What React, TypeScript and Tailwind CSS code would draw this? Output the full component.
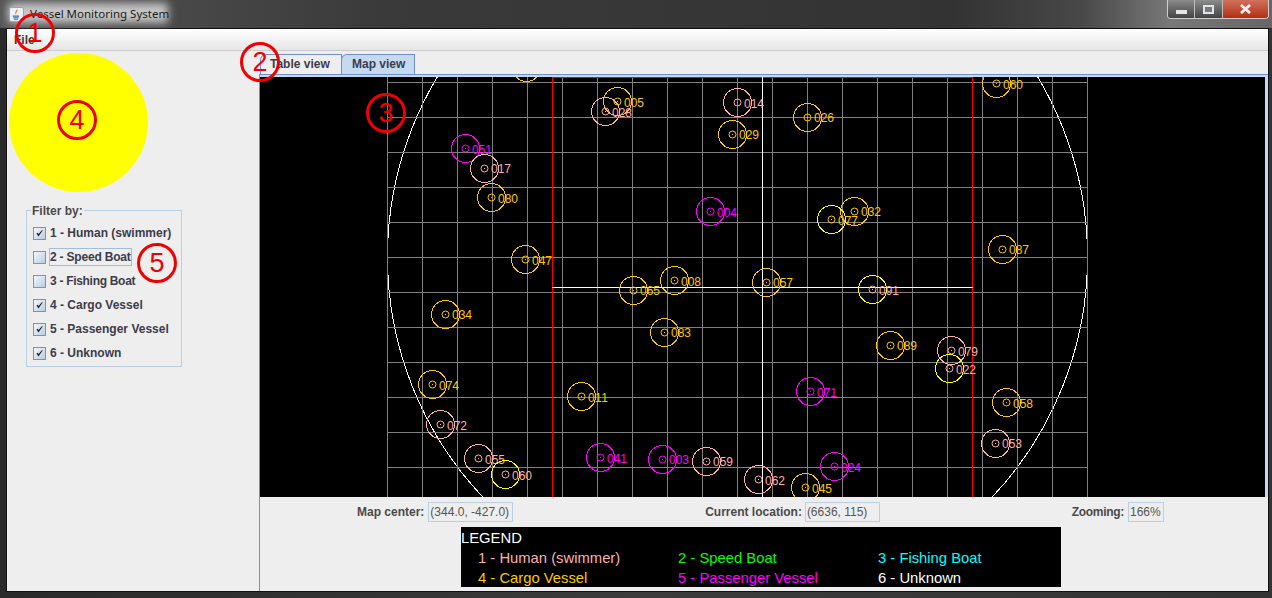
const ORANGE = "#ffc800";
const PINK = "#ffafaf";
const MAGENTA = "#ff00ff";
const YELLOW = "#ffff00";

type V = [string, number, number, string, string?];
const vessels: V[] = [
  ["", 526, 67, ORANGE],
  ["005", 617, 101, ORANGE],
  ["028", 605, 111, PINK],
  ["051", 465, 148, MAGENTA],
  ["017", 484, 168, PINK],
  ["080", 491, 197, ORANGE],
  ["004", 710, 211, MAGENTA],
  ["047", 525, 259, ORANGE],
  ["008", 674, 280, ORANGE],
  ["065", 633, 290, ORANGE],
  ["014", 737, 102, PINK],
  ["029", 732, 134, ORANGE],
  ["026", 807, 117, ORANGE],
  ["060", 996, 83, ORANGE],
  ["032", 854, 211, ORANGE],
  ["077", 831, 219, ORANGE, YELLOW],
  ["087", 1002, 249, ORANGE],
  ["057", 766, 282, ORANGE],
  ["091", 872, 289, PINK, YELLOW],
  ["034", 445, 314, ORANGE],
  ["083", 664, 332, ORANGE],
  ["074", 432, 384, ORANGE],
  ["011", 581, 396, ORANGE],
  ["072", 440, 424, PINK],
  ["055", 478, 458, PINK],
  ["060", 505, 474, PINK, YELLOW],
  ["041", 600, 457, MAGENTA],
  ["003", 662, 459, MAGENTA],
  ["059", 706, 461, PINK],
  ["089", 890, 345, ORANGE],
  ["079", 951, 350, PINK],
  ["022", 949, 368, PINK, YELLOW],
  ["071", 810, 391, MAGENTA],
  ["058", 1006, 402, ORANGE],
  ["053", 995, 443, PINK],
  ["024", 834, 466, MAGENTA],
  ["062", 758, 479, PINK],
  ["045", 805, 487, ORANGE],
];

// labels drawn one pixel lower relative to their circle in the reference
const lowLabels = new Set([
  "005", "028", "051", "080", "004", "047", "008", "014", "060", "091", "074",
  "011", "072", "055", "077", "041", "079", "022", "071", "058", "024", "062", "045",
]);

const filters: [string, boolean, string, boolean?][] = [
  ["1 - Human (swimmer)", true, "tracking-normal"],
  ["2 - Speed Boat", false, "tracking-[-0.2px]", true],
  ["3 - Fishing Boat", false, "tracking-[-0.3px]"],
  ["4 - Cargo Vessel", true, "tracking-normal"],
  ["5 - Passenger Vessel", true, "tracking-normal"],
  ["6 - Unknown", true, "tracking-normal"],
];

function MapCanvas() {
  const xs = Array.from({ length: 21 }, (_, i) => 387.5 + i * 35);
  const ys = Array.from({ length: 12 }, (_, i) => 82.5 + i * 35);
  return (
    <svg
      width="1005"
      height="420"
      viewBox="260 77 1005 420"
      className="block w-[1005px] h-[420px] bg-black shrink-0"
      shapeRendering="crispEdges"
    >
      <circle cx={737.5} cy={257} r={350} fill="none" stroke="#fff" strokeWidth={1} />
      {xs.map((x) => (
        <line key={x} x1={x} x2={x} y1={77} y2={497} stroke="#808080" />
      ))}
      {ys.map((y) => (
        <line key={y} x1={387} x2={1088} y1={y} y2={y} stroke="#808080" />
      ))}
      <line x1={552.5} x2={552.5} y1={77} y2={497} stroke="#ff0000" />
      <line x1={972.5} x2={972.5} y1={77} y2={497} stroke="#ff0000" />
      <line x1={552} x2={973} y1={77.5} y2={77.5} stroke="#ff0000" />
      <line x1={552} x2={973} y1={287.5} y2={287.5} stroke="#ffffff" />
      <line x1={762.5} x2={762.5} y1={77} y2={497} stroke="#ffffff" />
      {vessels.map(([id, x, y, c, ring], i) => (
        <g key={i}>
          <circle cx={x + 0.5} cy={y + 0.5} r={14} fill="none" stroke={ring ?? c} />
          <circle cx={x + 0.5} cy={y + 0.5} r={3.5} fill="none" stroke={c} shapeRendering="auto" />
          <rect x={x} y={y} width={1} height={1} fill={c} />
          {id && (
            <text
              x={x + 7}
              y={y + (lowLabels.has(id) ? 6 : 5)}
              fill={c}
              fontSize={12}
              fontFamily="'Liberation Sans', Arial, sans-serif"
              textLength={20}
            >
              {id}
            </text>
          )}
        </g>
      ))}
    </svg>
  );
}

function Check({ on }: { on: boolean }) {
  return (
    <span className="w-[13px] h-[13px] border border-[#7f93ad] bg-gradient-to-br from-[#f4f8fc] to-[#b8cce4] flex items-center justify-center shrink-0">
      {on && (
        <svg width="9" height="9" viewBox="0 0 9 9">
          <path d="M1.5 4.5 L3.5 7.5 L7.8 1.2 L6.8 1.2 L3.6 5 L2.6 3.8 Z" fill="#222" />
        </svg>
      )}
    </span>
  );
}

function Ring({ n, className }: { n: string; className: string }) {
  return (
    <div
      className={
        "absolute w-[40px] h-[40px] rounded-full border-[3px] border-[#f00000] flex items-center justify-center text-[27px] leading-none text-[#f00000] font-['Liberation_Sans',Arial,sans-serif] " +
        className
      }
    >
      {n}
    </div>
  );
}

function Field({ label, value, w, lc = "" }: { label: string; value: string; w: string; lc?: string }) {
  return (
    <div className="flex items-start gap-[4px]">
      <span className={"font-bold text-[#4a4a4a] text-[12px] leading-[20px] " + lc}>{label}</span>
      <span className={"h-[20px] border border-[#b8cfe5] text-[#555] text-[12px] leading-[19px] pl-[1px] " + w}>{value}</span>
    </div>
  );
}

function Legend() {
  const items: [string, string][] = [
    ["1 - Human (swimmer)", PINK],
    ["2 - Speed Boat", "#00ff00"],
    ["3 - Fishing Boat", "#00ffff"],
    ["4 - Cargo Vessel", ORANGE],
    ["5 - Passenger Vessel", MAGENTA],
    ["6 - Unknown", "#ffffff"],
  ];
  return (
    <div className="w-[600px] h-[60px] bg-black ml-[201px] pt-px text-[14.8px] leading-[20px] text-white">
      <div className="h-[20px]">LEGEND</div>
      <div className="grid grid-cols-[200px_200px_200px] pl-[17px]">
        {items.map(([t, c]) => (
          <div key={t} style={{ color: c }} className="h-[20px] whitespace-nowrap">
            {t}
          </div>
        ))}
      </div>
    </div>
  );
}

function WinButtons() {
  return (
    <div className="absolute right-[3px] top-0 flex h-[19px] w-[102px] rounded-b-[4px] border border-t-0 border-[#cfcfcf] overflow-hidden">
      <div className="w-[27px] bg-gradient-to-b from-[#8c8c8c] to-[#444] border-r border-[#bdbdbd] flex items-center justify-center">
        <span className="w-[11px] h-[4px] mt-[5px] bg-[#e6e6e6]" />
      </div>
      <div className="w-[28px] bg-gradient-to-b from-[#8c8c8c] to-[#444] border-r border-[#bdbdbd] flex items-center justify-center">
        <span className="w-[11px] h-[9px] border-2 border-[#dfe3ea] bg-[#777]" />
      </div>
      <div className="flex-1 bg-gradient-to-b from-[#d0705a] to-[#b22c10] flex items-center justify-center">
        <svg width="11" height="10" viewBox="0 0 11 10">
          <path d="M1 1 L10 9 M10 1 L1 9" stroke="#f0f0f0" strokeWidth="2.8" />
        </svg>
      </div>
    </div>
  );
}

export default function App() {
  return (
    <div className="relative w-[1272px] h-[598px] overflow-hidden bg-gradient-to-r from-[#2a2a2a] via-[#3c3c3c] to-[#343434] font-['Liberation_Sans',Arial,sans-serif]">
      {/* title bar */}
      <div className="relative h-[28px] flex items-center pl-[9px] gap-[6px] bg-[linear-gradient(90deg,#555_0%,#3a3a3a_30%,#333_75%,#484848_85%,#787878_92%,#666_100%)]">
        <div className="absolute left-[8px] top-[3px] w-[160px] h-[20px] bg-[#dcdcdc] opacity-85 blur-[4px]" />
        <svg width="15" height="15" viewBox="0 0 14 14" className="relative">
          <rect x="0.5" y="0.5" width="13" height="13" rx="1.5" fill="#eef2f7" stroke="#9aa6b5" />
          <path d="M7.5 2 C9 4 5.5 5 7 7.5 C5 6 6 4 7.5 2 Z" fill="#e8761c" />
          <path d="M3.5 8.5 H9.5 M4 10 H9 M4.5 11.5 H8.5" stroke="#3d6ea8" strokeWidth="1" />
        </svg>
        <span className="relative text-[11.5px] text-[#1a1a1a] font-['Noto_Sans',sans-serif]">Vessel Monitoring System</span>
        <WinButtons />
      </div>

      {/* window client area */}
      <div className="ml-[6px] mr-[3px] h-[564px] border border-[#111] bg-[#eeeeee] flex flex-col">
        <div className="h-[22px] shrink-0 bg-gradient-to-b from-white to-[#e6e6e6] border-b border-[#cccccc] pl-[7px] text-[12px] leading-[23px] font-bold text-[#3c3c3c]">
          File
        </div>
        <div className="flex-1 flex min-h-0">
          {/* left column */}
          <div className="w-[252px] shrink-0 pl-[2px] pt-[2px]">
            <div className="w-[139px] h-[139px] rounded-full bg-[#ffff00]" />
            <div className="relative ml-[17px] mt-[18px] w-[156px] h-[157px] border border-[#b8cfe5] pt-[10px] pl-[6px]">
              <span className="absolute left-[4px] -top-[7px] bg-[#eeeeee] px-[1px] text-[12px] leading-[14px] font-bold text-[#4a4a4a]">
                Filter by:
              </span>
              {filters.map(([t, on, tr, focus]) => (
                <div key={t} className="h-[24px] flex items-center gap-[3px]">
                  <Check on={on} />
                  <span
                    className={
                      "text-[12px] font-bold text-[#3c3c4a] whitespace-nowrap h-[18px] leading-[16px] border " +
                      tr +
                      " " +
                      (focus ? "border-[#a3bdd6]" : "border-transparent")
                    }
                  >
                    {t}
                  </span>
                </div>
              ))}
            </div>
          </div>

          {/* right column */}
          <div className="flex-1 min-w-0 flex flex-col">
            <div className="h-[23px] shrink-0 flex items-end pl-[1px] pt-[3px]">
              <div className="w-[82px] h-[20px] pl-[9px] border border-b-0 border-[#6e8fd0] rounded-tl-[6px] text-[12px] leading-[19px] font-bold text-[#3c3c4a]">
                Table view
              </div>
              <div className="w-[74px] h-[20px] pl-[10px] -ml-px border border-b-0 border-[#6e8fd0] rounded-tl-[6px] bg-[#c5d9f1] text-[12px] leading-[19px] font-bold text-[#3c3c4a]">
                Map view
              </div>
            </div>
            <div className="flex-1 min-h-0 border-l border-t border-[#6e8fd0] bg-[#eeeeee] flex flex-col">
              <div className="h-[2px] bg-[#c5d9f1] shrink-0" />
              <div className="flex bg-[#c5d9f1]">
                <MapCanvas />
              </div>
              <div className="h-[30px] pt-[5px] pl-[97px] pr-[104px] flex justify-between items-start">
                <Field label="Map center:" value="(344.0, -427.0)" w="w-[85px]" />
                <Field label="Current location:" value="(6636, 115)" w="w-[75px]" lc="-mr-px" />
                <Field label="Zooming:" value="166%" w="w-[36px]" lc="tracking-[-0.3px]" />
              </div>
              <Legend />
            </div>
          </div>
        </div>
      </div>

      <Ring n="1" className="left-[15px] top-[13px]" />
      <Ring n="2" className="left-[240px] top-[42px]" />
      <Ring n="3" className="left-[366px] top-[93px]" />
      <Ring n="4" className="left-[57px] top-[100px]" />
      <Ring n="5" className="left-[137px] top-[243px]" />
    </div>
  );
}
